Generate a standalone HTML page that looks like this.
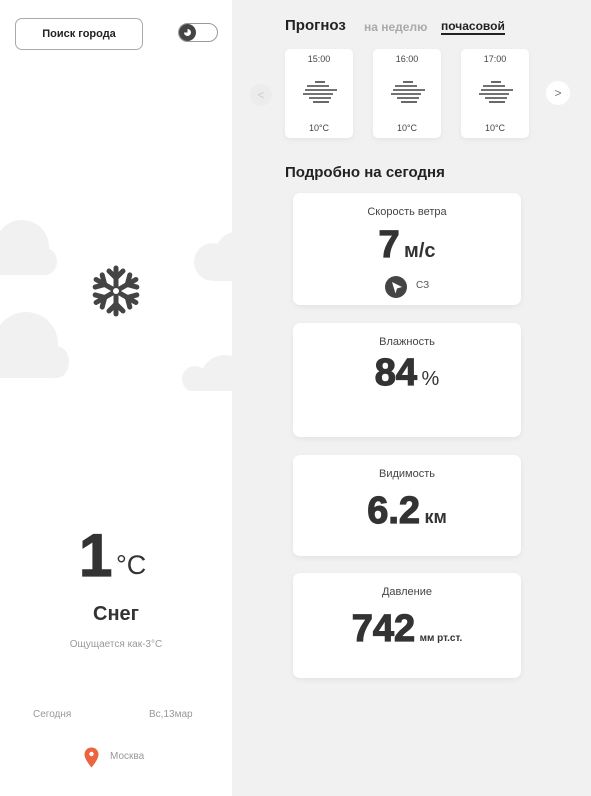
<!DOCTYPE html>
<html><head><meta charset="utf-8"><style>
*{margin:0;padding:0;box-sizing:border-box}
body{width:591px;height:796px;background:#f1f1f1;font-family:"Liberation Sans","Noto Sans CJK SC",sans-serif;position:relative;overflow:hidden;color:#222}
.left{position:absolute;left:0;top:0;width:232px;height:796px;background:#fff;overflow:hidden}
.a{position:absolute}
.cl{position:absolute;background:#f1f1f1;border-radius:50%}
.rc{position:absolute;background:#f1f1f1}
.hc{position:absolute;top:49px;width:68px;height:89px;background:#fff;border-radius:5px;box-shadow:0 2px 6px rgba(0,0,0,.05);font-size:9px;color:#444;text-align:center}
.hc .t{position:absolute;top:5px;width:100%}
.hc .b{position:absolute;top:74px;width:100%}
.hc svg{position:absolute;left:18px;top:31px}
.dc{position:absolute;left:293px;width:228px;background:#fff;border-radius:7px;box-shadow:0 2px 6px rgba(0,0,0,.06);text-align:center}
.dc .l{font-size:11px;color:#444;margin-top:13px}
.big{font-weight:900;color:#333;-webkit-text-stroke:1.2px #333}
</style></head><body>
<div class="left">
 <div class="cl" style="left:-5px;top:220px;width:54px;height:54px"></div>
 <div class="cl" style="left:33px;top:248px;width:24px;height:27px"></div>
 <div class="rc" style="left:0;top:255px;width:45px;height:20px"></div>
 <div class="cl" style="left:-6px;top:312px;width:64px;height:64px"></div>
 <div class="cl" style="left:44px;top:346px;width:25px;height:32px;border-radius:50%"></div>
 <div class="rc" style="left:0;top:350px;width:55px;height:28px"></div>
 <div class="cl" style="left:194px;top:243px;width:38px;height:38px"></div>
 <div class="cl" style="left:216px;top:232px;width:40px;height:40px"></div>
 <div class="rc" style="left:212px;top:255px;width:20px;height:26px"></div>
 <div class="cl" style="left:182px;top:366px;width:26px;height:26px"></div>
 <div class="cl" style="left:200px;top:355px;width:50px;height:50px"></div>
 <div class="rc" style="left:195px;top:375px;width:37px;height:16px"></div>
 <div class="rc" style="left:0;top:391px;width:232px;height:20px;background:#fff"></div>
 <div class="a" style="left:15px;top:18px;width:128px;height:32px;border:1px solid #aaa;border-radius:7px;font-size:11px;font-weight:bold;text-align:center;line-height:30px">Поиск города</div>
 <div class="a" style="left:178px;top:23px;width:40px;height:19px;border:1px solid #999;border-radius:10px"><div style="position:absolute;left:0px;top:0px;width:17px;height:17px;border-radius:50%;background:#444"><div style="position:absolute;left:5px;top:5px;width:7px;height:7px;border-radius:50%;background:#fff;clip-path:polygon(0 50%,50% 50%,50% 0,100% 0,100% 100%,0 100%)"></div></div></div>
 <svg class="a" style="left:91px;top:265px" width="50" height="52" viewBox="-25 -26 50 52"><defs><g id="arm"><line x1="0" y1="-3" x2="0" y2="-23"/><polyline points="-7,-20 0,-13 7,-20"/></g></defs><g stroke="#444" stroke-width="5" stroke-linecap="round" fill="none">
 <use href="#arm"/><use href="#arm" transform="rotate(60)"/><use href="#arm" transform="rotate(120)"/><use href="#arm" transform="rotate(180)"/><use href="#arm" transform="rotate(240)"/><use href="#arm" transform="rotate(300)"/></g><circle r="3" fill="#fff"/></svg>
 <div class="a big" style="left:79px;top:524px;font-size:60px;line-height:64px">1</div>
 <div class="a" style="left:116px;top:550px;font-size:27px;color:#333">°C</div>
 <div class="a" style="left:0;width:232px;top:603px;text-align:center;font-size:20px;font-weight:bold;color:#333">Снег</div>
 <div class="a" style="left:0;width:232px;top:639px;text-align:center;font-size:10px;color:#999">Ощущается как-3°C</div>
 <div class="a" style="left:33px;top:709px;font-size:10px;color:#999">Сегодня</div>
 <div class="a" style="left:149px;top:709px;font-size:10px;color:#999">Вс,13мар</div>
 <svg class="a" style="left:84px;top:747px" width="15" height="21" viewBox="0 0 15 21"><path d="M7.5 0.5C3.5 0.5 0.5 3.5 0.5 7.5c0 5 7 13 7 13s7-8 7-13c0-4-3-7-7-7z" fill="#ec6541"/><circle cx="7.5" cy="7" r="2.2" fill="#fff"/></svg>
 <div class="a" style="left:110px;top:751px;font-size:10px;color:#999">Москва</div>
</div>
<div class="a" style="left:285px;top:17px;font-size:15px;font-weight:bold;color:#222">Прогноз</div>
<div class="a" style="left:364px;top:20px;font-size:12px;font-weight:bold;color:#aaa">на неделю</div>
<div class="a" style="left:441px;top:20px;font-size:12px;font-weight:bold;color:#222;border-bottom:2px solid #222;line-height:13px">почасовой</div>
<div class="a" style="left:250px;top:84px;width:22px;height:22px;border-radius:50%;background:#ececec;color:#ccc;font-size:12px;text-align:center;line-height:22px">&lt;</div>
<div class="a" style="left:546px;top:81px;width:24px;height:24px;border-radius:50%;background:#fff;color:#777;font-size:12px;text-align:center;line-height:24px">&gt;</div>
<div class="hc" style="left:285px"><div class="t">15:00</div><svg width="34" height="24" viewBox="0 0 34 24"><g stroke="#444" stroke-width="1.6"><line x1="12" y1="2" x2="22" y2="2"/><line x1="4" y1="6" x2="26" y2="6"/><line x1="2" y1="10" x2="34" y2="10"/><line x1="0" y1="14" x2="30" y2="14"/><line x1="6" y1="18" x2="28" y2="18"/><line x1="10" y1="22" x2="26" y2="22"/></g></svg><div class="b">10°C</div></div>
<div class="hc" style="left:373px"><div class="t">16:00</div><svg width="34" height="24" viewBox="0 0 34 24"><g stroke="#444" stroke-width="1.6"><line x1="12" y1="2" x2="22" y2="2"/><line x1="4" y1="6" x2="26" y2="6"/><line x1="2" y1="10" x2="34" y2="10"/><line x1="0" y1="14" x2="30" y2="14"/><line x1="6" y1="18" x2="28" y2="18"/><line x1="10" y1="22" x2="26" y2="22"/></g></svg><div class="b">10°C</div></div>
<div class="hc" style="left:461px"><div class="t">17:00</div><svg width="34" height="24" viewBox="0 0 34 24"><g stroke="#444" stroke-width="1.6"><line x1="12" y1="2" x2="22" y2="2"/><line x1="4" y1="6" x2="26" y2="6"/><line x1="2" y1="10" x2="34" y2="10"/><line x1="0" y1="14" x2="30" y2="14"/><line x1="6" y1="18" x2="28" y2="18"/><line x1="10" y1="22" x2="26" y2="22"/></g></svg><div class="b">10°C</div></div>
<div class="a" style="left:285px;top:164px;font-size:15px;font-weight:bold;color:#222">Подробно на сегодня</div>
<div class="dc" style="top:193px;height:112px"><div class="l">Скорость ветра</div>
 <div style="margin-top:6px"><span class="big" style="font-size:38px">7</span> <span style="font-size:20px;font-weight:bold;color:#333">м/с</span></div>
 <div style="position:absolute;left:92px;top:83px;width:22px;height:22px;border-radius:50%;background:#444"><svg width="22" height="22" viewBox="0 0 22 22"><path d="M7 6l10 5-5 1.5-1.5 5z" fill="#fff"/></svg></div>
 <div style="position:absolute;left:123px;top:87px;font-size:10px;color:#555">СЗ</div></div>
<div class="dc" style="top:323px;height:114px"><div class="l">Влажность</div>
 <div style="margin-top:4px"><span class="big" style="font-size:38px">84</span> <span style="font-size:20px;color:#333">%</span></div></div>
<div class="dc" style="top:455px;height:101px"><div class="l">Видимость</div>
 <div style="margin-top:10px"><span class="big" style="font-size:38px">6.2</span> <span style="font-size:18px;font-weight:bold;color:#333">км</span></div></div>
<div class="dc" style="top:573px;height:105px"><div class="l">Давление</div>
 <div style="margin-top:10px"><span class="big" style="font-size:38px">742</span> <span style="font-size:10px;font-weight:bold;color:#333">мм рт.ст.</span></div></div>
</body></html>
